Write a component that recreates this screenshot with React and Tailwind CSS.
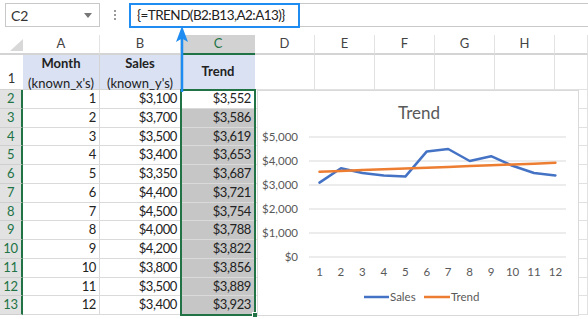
import React from "react";

const cols = ["A", "B", "C", "D", "E", "F", "G", "H", ""];
const sales = [3100, 3700, 3500, 3400, 3350, 4400, 4500, 4000, 4200, 3800, 3500, 3400];
const trend = [3552, 3586, 3619, 3653, 3687, 3721, 3754, 3788, 3822, 3856, 3889, 3923];

const fmt = (v) => "$" + v.toLocaleString("en-US");

// chart geometry (relative to the chart box)
const xAt = (i) => 61.5 + i * 21.45;
const yAt = (v) => 166 - (v / 5000) * 120;
const toPoints = (arr) => arr.map((v, i) => `${xAt(i).toFixed(1)},${yAt(v).toFixed(1)}`).join(" ");

const TrendChart = () => (
  <div className="absolute left-[257px] top-[90px] w-[322px] h-[226px] bg-white border border-[#d9d9d9]">
    <svg width="322" height="226" className="block" style={{ fontFamily: "Lato, 'Liberation Sans', sans-serif" }}>
      <text x="161" y="28" textAnchor="middle" fontSize="17" fill="#595959">Trend</text>
      {[5000, 4000, 3000, 2000, 1000, 0].map((v) => (
        <g key={v}>
          <line x1="51" x2="308" y1={yAt(v)} y2={yAt(v)} stroke="#d9d9d9" strokeWidth="1" />
          <text x="40" y={yAt(v) + 4} textAnchor="end" fontSize="11.5" fill="#595959">{fmt(v)}</text>
        </g>
      ))}
      {sales.map((_, i) => (
        <text key={i} x={xAt(i)} y="185" textAnchor="middle" fontSize="11.5" fill="#595959">{i + 1}</text>
      ))}
      <polyline points={toPoints(sales)} fill="none" stroke="#4472c4" strokeWidth="2.5" strokeLinejoin="round" strokeLinecap="round" />
      <polyline points={toPoints(trend)} fill="none" stroke="#ed7d31" strokeWidth="2.5" strokeLinecap="round" />
      <line x1="106" x2="131" y1="206" y2="206" stroke="#4472c4" strokeWidth="2.5" />
      <text x="132" y="210" fontSize="11.5" fill="#595959">Sales</text>
      <line x1="166" x2="192" y1="206" y2="206" stroke="#ed7d31" strokeWidth="2.5" />
      <text x="193" y="210" fontSize="11.5" fill="#595959">Trend</text>
    </svg>
  </div>
);

const FormulaBar = () => (
  <div className="flex items-start h-[35px] pt-[3px]">
    <div className="ml-[5px] w-[95px] h-[24px] border border-[#c8c8c8] flex items-center justify-between pl-[5px] pr-[7px] text-[14px] text-[#333]">
      <span>C2</span>
      <span className="w-0 h-0 border-l-[4px] border-r-[4px] border-t-[5px] border-l-transparent border-r-transparent border-t-[#777]" />
    </div>
    <div className="w-[29px] h-[24px] flex flex-col items-center justify-center gap-[2px]">
      <span className="w-[2px] h-[2px] bg-[#9a9a9a]" />
      <span className="w-[2px] h-[2px] bg-[#9a9a9a]" />
      <span className="w-[2px] h-[2px] bg-[#9a9a9a]" />
    </div>
    <div className="flex-1 h-[24px] border-y border-[#c8c8c8] flex">
      <div className="w-[171px] h-[25px] -mt-[1px] border-2 border-[#1e8cf0] flex items-center pl-[6px] text-[13.5px] tracking-[-0.55px] text-[#222]">
        {"{=TREND(B2:B13,A2:A13)}"}
      </div>
    </div>
  </div>
);

export default function App() {
  const rows = sales.map((s, i) => ({ n: i + 2, x: i + 1, y: s, t: trend[i] }));

  return (
    <div className="relative w-[588px] h-[319px] bg-white overflow-hidden" style={{ fontFamily: "Lato, 'Liberation Sans', sans-serif" }}>
      <FormulaBar />
      <div className="grid grid-cols-[23px_77px_81px_74px_60px_60px_60px_60px_60px_33px] grid-rows-[20px_35px_repeat(12,18.75px)] text-[13px] text-[#222]">
        {/* column headers */}
        <div className="relative border-b-2 border-[#d4d4d4]">
          <span className="absolute left-[10px] top-[4px] w-0 h-0 border-b-[12px] border-l-[13px] border-b-[#d8d8d8] border-l-transparent" />
        </div>
        {cols.map((c) =>
          c === "C" ? (
            <div key={c} className="bg-[#d2d2d2] border-b-2 border-[#217346] text-[#217346] flex items-center justify-center">C</div>
          ) : (
            <div key={c || "I"} className="border-r border-b-2 border-r-[#e3e3e3] border-b-[#d4d4d4] flex items-center justify-center text-[#444]">{c}</div>
          )
        )}

        {/* row 1 */}
        <div className="border-b border-[#d4d4d4] flex items-end justify-center pb-[1px] text-[#333]">1</div>
        <div className="bg-[#d9e1f2] border-r border-b border-[#d4d4d4] flex flex-col items-center pt-[1px]">
          <span className="font-bold leading-[15px]">Month</span>
          <span className="leading-[14px] mt-[5px]">(known_x's)</span>
        </div>
        <div className="bg-[#d9e1f2] border-r border-b border-[#d4d4d4] flex flex-col items-center pt-[1px]">
          <span className="font-bold leading-[15px]">Sales</span>
          <span className="leading-[14px] mt-[5px]">(known_y's)</span>
        </div>
        <div className="bg-[#d9e1f2] border-b border-[#d4d4d4] flex items-center justify-center font-bold">Trend</div>
        {cols.slice(3).map((c, i) => (
          <div key={"r1" + i} className="border-r border-b border-[#e1e1e1]" />
        ))}

        {/* data rows */}
        {rows.map((r) => (
          <React.Fragment key={r.n}>
            <div className="bg-[#e2e2e2] border-b border-[#cfcfcf] border-r-2 border-r-[#217346] flex items-center justify-center text-[#217346] tracking-[-0.3px]">{r.n}</div>
            <div className="border-r border-b border-[#dadada] flex items-center justify-end pr-[3px] tracking-[-0.4px]">{r.x}</div>
            <div className="border-r border-b border-[#dadada] flex items-center justify-end pr-[3px] tracking-[-0.4px]">{fmt(r.y)}</div>
            <div className={`${r.n === 2 ? "bg-white" : "bg-[#c6c6c6]"} border-b border-[#dadada] flex items-center justify-end pr-[4px] tracking-[-0.4px]`}>{fmt(r.t)}</div>
            {cols.slice(3).map((c, i) => (
              <div key={r.n + "-" + i} className="border-r border-b border-[#e1e1e1]" />
            ))}
          </React.Fragment>
        ))}
      </div>

      {/* selection outline on C2:C13 */}
      <div className="absolute left-[180px] top-[89px] w-[76px] h-[227px] border-2 border-[#217346]" />
      <div className="absolute left-[252px] top-[312px] w-[6px] h-[6px] bg-[#217346] border border-white" />

      <TrendChart />

      {/* blue arrow from formula to column C */}
      <svg className="absolute left-[174px] top-[26px]" width="16" height="66">
        <line x1="8" x2="8" y1="10" y2="66" stroke="#1e8cf0" strokeWidth="2.5" />
        <polygon points="8,0 14,16 8,12.5 2,16" fill="#1e8cf0" />
      </svg>
    </div>
  );
}
